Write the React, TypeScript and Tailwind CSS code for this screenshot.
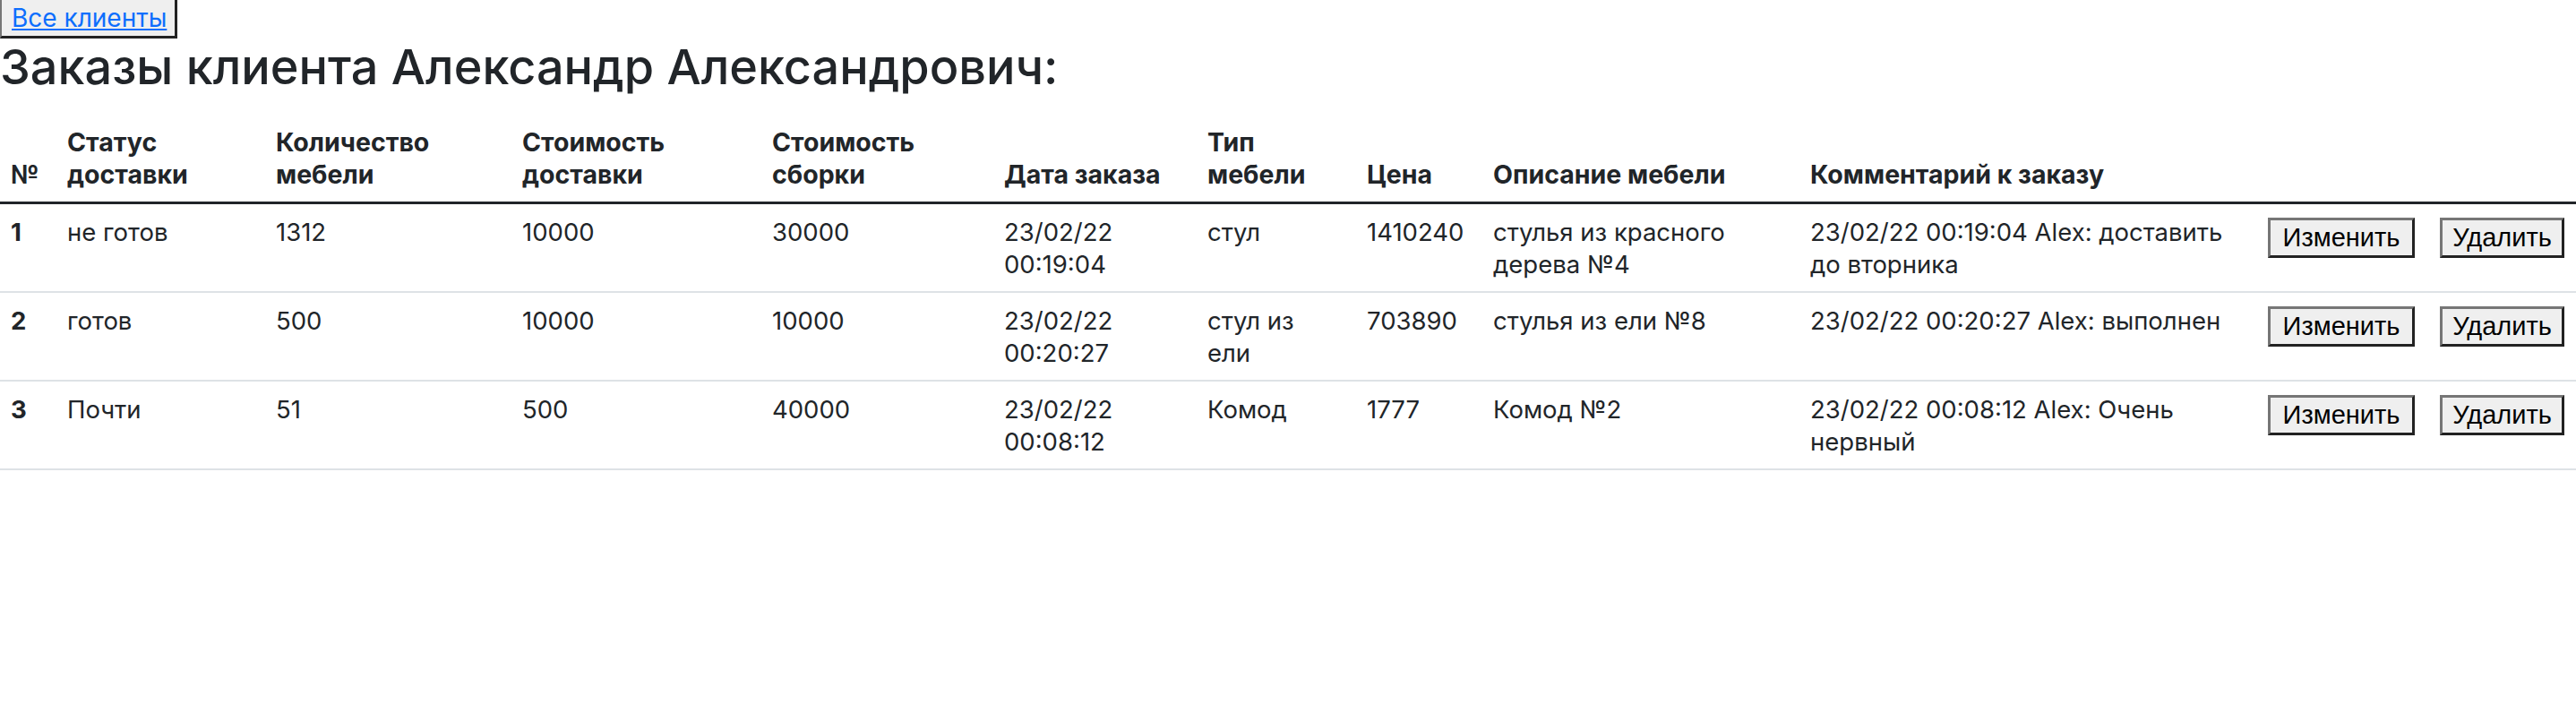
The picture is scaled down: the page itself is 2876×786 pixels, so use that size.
import React from "react";

type Order = {
  id: number;
  status: string;
  count: string;
  delivery: string;
  assembly: string;
  date: [string, string];
  type: React.ReactNode;
  price: string;
  description: React.ReactNode;
  comment: React.ReactNode;
};

const orders: Order[] = [
  {
    id: 1,
    status: "не готов",
    count: "1312",
    delivery: "10000",
    assembly: "30000",
    date: ["23/02/22", "00:19:04"],
    type: "стул",
    price: "1410240",
    description: (
      <>
        стулья из красного
        <br />
        дерева №4
      </>
    ),
    comment: (
      <>
        23/02/22 00:19:04 Alex: доставить
        <br />
        до вторника
      </>
    ),
  },
  {
    id: 2,
    status: "готов",
    count: "500",
    delivery: "10000",
    assembly: "10000",
    date: ["23/02/22", "00:20:27"],
    type: (
      <>
        стул из
        <br />
        ели
      </>
    ),
    price: "703890",
    description: "стулья из ели №8",
    comment: "23/02/22 00:20:27 Alex: выполнен",
  },
  {
    id: 3,
    status: "Почти",
    count: "51",
    delivery: "500",
    assembly: "40000",
    date: ["23/02/22", "00:08:12"],
    type: "Комод",
    price: "1777",
    description: "Комод №2",
    comment: (
      <>
        23/02/22 00:08:12 Alex: Очень
        <br />
        нервный
      </>
    ),
  },
];

const btn =
  "bg-[#efefef] border-[3px] border-t-[#767676] border-l-[#767676] border-b-[#222] border-r-[#222] text-black font-['Liberation_Sans',Arial,sans-serif]";

const App: React.FC = () => {
  return (
    <div className="min-h-[786px] bg-white text-[#212529] font-['Inter','Noto_Sans',sans-serif] text-[27.5px]">
      <button className="h-[43px] w-[198px] bg-[#efefef] border-r-[3px] border-b-[3px] border-l-2 border-[#222] border-l-[#767676] pl-[11px] text-left whitespace-nowrap">
        <a href="#" className="text-[#0d6efd] underline text-[28px] leading-none">
          Все клиенты
        </a>
      </button>

      <h2 className="mt-[1px] mb-[22px] text-[54px] leading-[62px] font-medium whitespace-nowrap">
        Заказы клиента Александр Александрович:
      </h2>

      <table className="w-full table-fixed border-collapse">
        <colgroup>
          <col className="w-[63px]" />
          <col className="w-[233px]" />
          <col className="w-[275px]" />
          <col className="w-[279px]" />
          <col className="w-[259px]" />
          <col className="w-[227px]" />
          <col className="w-[178px]" />
          <col className="w-[141px]" />
          <col className="w-[354px]" />
          <col className="w-[511px]" />
          <col className="w-[192px]" />
          <col className="w-[164px]" />
        </colgroup>
        <thead>
          <tr className="border-b-[3px] border-[#212529] text-left align-bottom font-bold text-[28.5px] leading-9">
            <th className="px-3 py-[12.5px]">№</th>
            <th className="px-3 py-[12.5px]">
              Статус
              <br />
              доставки
            </th>
            <th className="px-3 py-[12.5px]">
              Количество
              <br />
              мебели
            </th>
            <th className="px-3 py-[12.5px]">
              Стоимость
              <br />
              доставки
            </th>
            <th className="px-3 py-[12.5px]">
              Стоимость
              <br />
              сборки
            </th>
            <th className="px-3 py-[12.5px] whitespace-nowrap">Дата заказа</th>
            <th className="px-3 py-[12.5px]">
              Тип
              <br />
              мебели
            </th>
            <th className="px-3 py-[12.5px]">Цена</th>
            <th className="px-3 py-[12.5px] whitespace-nowrap">Описание мебели</th>
            <th className="px-3 py-[12.5px] whitespace-nowrap">Комментарий к заказу</th>
            <th className="px-3 py-[12.5px]"></th>
            <th className="px-3 py-[12.5px]"></th>
          </tr>
        </thead>
        <tbody>
          {orders.map((o) => (
            <tr key={o.id} className="border-b-2 border-[#dee2e6] align-top leading-9 whitespace-nowrap">
              <td className="px-3 py-[12.5px] font-bold">{o.id}</td>
              <td className="px-3 py-[12.5px]">{o.status}</td>
              <td className="px-3 py-[12.5px]">{o.count}</td>
              <td className="px-3 py-[12.5px]">{o.delivery}</td>
              <td className="px-3 py-[12.5px]">{o.assembly}</td>
              <td className="px-3 py-[12.5px]">
                {o.date[0]}
                <br />
                {o.date[1]}
              </td>
              <td className="px-3 py-[12.5px]">{o.type}</td>
              <td className="px-3 py-[12.5px]">{o.price}</td>
              <td className="px-3 py-[12.5px]">{o.description}</td>
              <td className="px-3 py-[12.5px]">{o.comment}</td>
              <td className="px-3 py-[12.5px]">
                <button className={`${btn} mt-[2px] h-[45px] w-[164px] text-[29px] leading-none`}>
                  Изменить
                </button>
              </td>
              <td className="px-3 py-[12.5px]">
                <button className={`${btn} mt-[2px] h-[45px] w-[139px] text-[29px] leading-none`}>
                  Удалить
                </button>
              </td>
            </tr>
          ))}
        </tbody>
      </table>
    </div>
  );
};

export default App;
